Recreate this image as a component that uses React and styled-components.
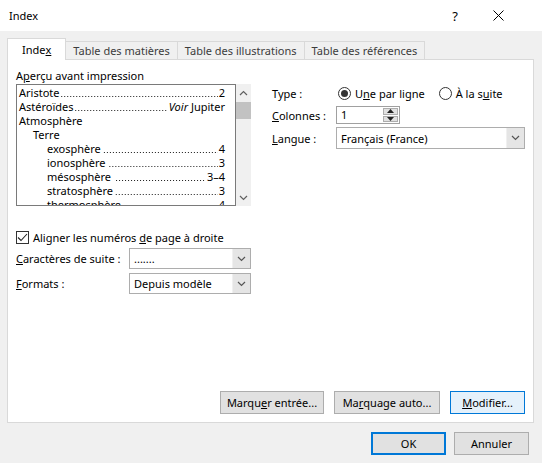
import React from "react";
import styled, { createGlobalStyle, css } from "styled-components";

const GlobalStyle = createGlobalStyle`
  html, body {
    margin: 0;
    padding: 0;
    background: #f0f0f0;
  }
  body {
    font-family: "Noto Sans", "Segoe UI", sans-serif;
    font-size: 11px;
    color: #000;
  }
`;

const Window = styled.div`
  width: 542px;
  height: 463px;
  display: flex;
  flex-direction: column;
  background: #f0f0f0;
  overflow: hidden;
`;

const TitleBar = styled.div`
  height: 31px;
  flex-shrink: 0;
  background: #fff;
  display: flex;
  align-items: center;
  padding-left: 9px;
  padding-right: 21px;
`;

const TitleText = styled.div`
  flex: 1;
`;

const CaptionButton = styled.div`
  width: ${(p) => p.$w}px;
  height: 31px;
  display: flex;
  align-items: center;
  justify-content: center;
  font-size: 13px;
`;

const Body = styled.div`
  flex: 1;
  display: flex;
  flex-direction: column;
  padding: 7px 8px 0 7px;
`;

const TabStrip = styled.div`
  display: flex;
  align-items: flex-end;
  height: 21px;
`;

const Tab = styled.div`
  box-sizing: border-box;
  border: 1px solid #d9d9d9;
  border-bottom: none;
  display: flex;
  align-items: center;
  white-space: nowrap;
  ${(p) =>
    p.$active
      ? css`
          height: 22px;
          padding: 0 14px;
          background: #fff;
          color: #000;
          position: relative;
          z-index: 1;
          margin-bottom: -1px;
        `
      : css`
          height: 18px;
          padding: 0 7px;
          background: #f0f0f0;
          color: #3c3c3c;
          margin-left: -1px;
        `}
`;

const Panel = styled.div`
  box-sizing: border-box;
  height: 364px;
  background: #fff;
  border: 1px solid #d9d9d9;
  display: flex;
  flex-direction: column;
  padding: 8px 8px 8px 8px;
`;

const TopGrid = styled.div`
  display: grid;
  grid-template-columns: 235px 1fr;
  column-gap: 21px;
`;

const Column = styled.div`
  display: flex;
  flex-direction: column;
  padding-top: ${(p) => p.$top || 0}px;
`;

const Label = styled.div`
  height: 16px;
  line-height: 16px;
`;

const ListWrap = styled.div`
  display: flex;
  height: 122px;
`;

const ListBox = styled.div`
  box-sizing: border-box;
  width: 220px;
  height: 122px;
  border: 1px solid #7a7a7a;
  background: #fff;
  overflow: hidden;
  padding-top: 1px;
`;

const Row = styled.div`
  height: 14px;
  line-height: 14px;
  display: flex;
  white-space: nowrap;
  padding-left: ${(p) => 2 + p.$level * 14}px;
  padding-right: 10px;
`;

/* dot leader between an entry and its page number */
const Leader = styled.span`
  flex: 1;
  margin: 0 1px;
  background-image: linear-gradient(to right, #1a1a1a 1px, transparent 1px);
  background-size: 3px 1px;
  background-repeat: repeat-x;
  background-position: right 0 bottom 3px;
`;

const Scrollbar = styled.div`
  width: 15px;
  height: 122px;
  background: #f0f0f0;
  display: flex;
  flex-direction: column;
  align-items: center;
`;

const ScrollArrow = styled.div`
  width: 15px;
  height: 17px;
  display: flex;
  align-items: center;
  justify-content: center;
`;

const Thumb = styled.div`
  width: 15px;
  height: 17px;
  margin-top: 1px;
  background: #c2c2c2;
`;

const CheckRow = styled.div`
  margin-top: 23px;
  height: 16px;
  display: flex;
  align-items: center;
  gap: 4px;
`;

const Checkbox = styled.div`
  box-sizing: border-box;
  width: 13px;
  height: 13px;
  border: 1px solid #333;
  background: #fff;
  display: flex;
  align-items: center;
  justify-content: center;
`;

const FieldRow = styled.div`
  display: flex;
  align-items: center;
  margin-top: ${(p) => p.$gap}px;
  min-height: ${(p) => p.$h || 0}px;
`;

const FieldLabel = styled.div`
  width: ${(p) => p.$w}px;
  flex-shrink: 0;
  white-space: nowrap;
`;

const Select = styled.div`
  box-sizing: border-box;
  width: ${(p) => (p.$w ? `${p.$w}px` : "auto")};
  flex: ${(p) => (p.$w ? "none" : 1)};
  height: ${(p) => p.$h}px;
  border: 1px solid #adadad;
  background: #fff;
  display: flex;
  align-items: stretch;
`;

const SelectValue = styled.div`
  flex: 1;
  display: flex;
  align-items: center;
  padding-left: 4px;
  white-space: nowrap;
`;

const SelectArrow = styled.div`
  width: 17px;
  background: #e5e5e5;
  border-left: 1px solid #f0f0f0;
  display: flex;
  align-items: center;
  justify-content: center;
`;

const RadioGroup = styled.div`
  display: flex;
  align-items: center;
  gap: 14px;
  padding-left: 2px;
`;

const RadioItem = styled.div`
  display: flex;
  align-items: center;
  gap: 4px;
  white-space: nowrap;
`;

const RadioCircle = styled.div`
  box-sizing: border-box;
  width: 13px;
  height: 13px;
  border-radius: 50%;
  border: 1px solid #333;
  background: #fff;
  display: flex;
  align-items: center;
  justify-content: center;
  &::after {
    content: "";
    width: 7px;
    height: 7px;
    border-radius: 50%;
    background: ${(p) => (p.$on ? "#333" : "transparent")};
  }
`;

const Spinner = styled.div`
  box-sizing: border-box;
  width: 64px;
  height: 18px;
  border: 1px solid #a0a0a0;
  background: #fff;
  display: flex;
`;

const SpinValue = styled.div`
  flex: 1;
  padding-left: 4px;
  line-height: 16px;
`;

const SpinButtons = styled.div`
  width: 15px;
  display: flex;
  flex-direction: column;
  gap: 1px;
  padding: 1px 1px 1px 0;
`;

const SpinButton = styled.div`
  flex: 1;
  background: #e1e1e1;
  border: 1px solid #adadad;
  display: flex;
  align-items: center;
  justify-content: center;
`;

const PanelButtons = styled.div`
  margin-top: auto;
  display: flex;
  justify-content: flex-end;
  gap: 10px;
`;

const Button = styled.div`
  box-sizing: border-box;
  width: ${(p) => p.$w}px;
  height: 23px;
  display: flex;
  align-items: center;
  justify-content: center;
  white-space: nowrap;
  background: ${(p) => (p.$hot ? "#e5f1fb" : "#e1e1e1")};
  border: ${(p) => (p.$default ? 2 : 1)}px solid
    ${(p) => (p.$hot || p.$default ? "#0078d7" : "#adadad")};
`;

const Footer = styled.div`
  display: flex;
  justify-content: flex-end;
  gap: 8px;
  margin-top: 9px;
  padding-right: 5px;
`;

const Chevron = ({ up, color = "#606060" }) => (
  <svg width="9" height="6" viewBox="0 0 9 6">
    <path
      d={up ? "M1 5 L4.5 1.5 L8 5" : "M1 1 L4.5 4.5 L8 1"}
      fill="none"
      stroke={color}
      strokeWidth="1.2"
    />
  </svg>
);

const Triangle = ({ up }) => (
  <svg width="7" height="4" viewBox="0 0 7 4">
    <path d={up ? "M0 4 L3.5 0 L7 4 Z" : "M0 0 L3.5 4 L7 0 Z"} fill="#222" />
  </svg>
);

const entries = [
  { name: "Aristote", page: "2", level: 0 },
  {
    name: "Astéroïdes",
    page: (
      <>
        <i>Voir</i> Jupiter
      </>
    ),
    level: 0,
  },
  { name: "Atmosphère", level: 0 },
  { name: "Terre", level: 1 },
  { name: "exosphère", page: "4", level: 2 },
  { name: "ionosphère\u00a0", page: "3", level: 2 },
  { name: "mésosphère\u00a0", page: "3–4", level: 2 },
  { name: "stratosphère", page: "3", level: 2 },
  { name: "thermosphère", page: "4", level: 2 },
];

function App() {
  return (
    <>
      <GlobalStyle />
      <Window>
        <TitleBar>
          <TitleText>Index</TitleText>
          <CaptionButton $w={40}>?</CaptionButton>
          <CaptionButton $w={46}>
            <svg width="11" height="11" viewBox="0 0 11 11">
              <path d="M0.5 0.5 L10.5 10.5 M10.5 0.5 L0.5 10.5" stroke="#000" strokeWidth="1" />
            </svg>
          </CaptionButton>
        </TitleBar>
        <Body>
          <TabStrip>
            <Tab $active>
              Inde<u>x</u>
            </Tab>
            <Tab>Table des matières</Tab>
            <Tab>Table des illustrations</Tab>
            <Tab>Table des références</Tab>
          </TabStrip>
          <Panel>
            <TopGrid>
              <Column>
                <Label>
                  A<u>p</u>erçu avant impression
                </Label>
                <ListWrap>
                  <ListBox>
                    {entries.map((e) => (
                      <Row key={e.name} $level={e.level}>
                        <span>{e.name}</span>
                        {e.page && (
                          <>
                            <Leader />
                            <span>{e.page}</span>
                          </>
                        )}
                      </Row>
                    ))}
                  </ListBox>
                  <Scrollbar>
                    <ScrollArrow>
                      <Chevron up />
                    </ScrollArrow>
                    <Thumb />
                    <div style={{ flex: 1 }} />
                    <ScrollArrow>
                      <Chevron />
                    </ScrollArrow>
                  </Scrollbar>
                </ListWrap>
                <CheckRow>
                  <Checkbox>
                    <svg width="11" height="9" viewBox="0 0 11 9">
                      <path d="M1 4.5 L4 7.5 L10 1" fill="none" stroke="#222" strokeWidth="1.1" />
                    </svg>
                  </Checkbox>
                  <span>
                    Aligner les numéros <u>d</u>e page à droite
                  </span>
                </CheckRow>
                <FieldRow $gap={3}>
                  <FieldLabel $w={113}>
                    <u>C</u>aractères de suite :
                  </FieldLabel>
                  <Select $w={122} $h={21}>
                    <SelectValue>.......</SelectValue>
                    <SelectArrow>
                      <Chevron color="#555" />
                    </SelectArrow>
                  </Select>
                </FieldRow>
                <FieldRow $gap={4}>
                  <FieldLabel $w={113}>
                    <u>F</u>ormats :
                  </FieldLabel>
                  <Select $w={122} $h={21}>
                    <SelectValue>Depuis modèle</SelectValue>
                    <SelectArrow>
                      <Chevron color="#555" />
                    </SelectArrow>
                  </Select>
                </FieldRow>
              </Column>
              <Column $top={16}>
                <FieldRow $gap={0} $h={18}>
                  <FieldLabel $w={64}>Type :</FieldLabel>
                  <RadioGroup>
                    <RadioItem>
                      <RadioCircle $on />
                      <span>
                        U<u>n</u>e par ligne
                      </span>
                    </RadioItem>
                    <RadioItem>
                      <RadioCircle />
                      <span>
                        À la s<u>u</u>ite
                      </span>
                    </RadioItem>
                  </RadioGroup>
                </FieldRow>
                <FieldRow $gap={4}>
                  <FieldLabel $w={64}>
                    <u>C</u>olonnes :
                  </FieldLabel>
                  <Spinner>
                    <SpinValue>1</SpinValue>
                    <SpinButtons>
                      <SpinButton>
                        <Triangle up />
                      </SpinButton>
                      <SpinButton>
                        <Triangle />
                      </SpinButton>
                    </SpinButtons>
                  </Spinner>
                </FieldRow>
                <FieldRow $gap={3}>
                  <FieldLabel $w={64}>
                    <u>L</u>angue :
                  </FieldLabel>
                  <Select $h={22}>
                    <SelectValue>Français (France)</SelectValue>
                    <SelectArrow>
                      <Chevron color="#555" />
                    </SelectArrow>
                  </Select>
                </FieldRow>
              </Column>
            </TopGrid>
            <PanelButtons>
              <Button $w={104}>
                Marqu<u>e</u>r entrée...
              </Button>
              <Button $w={106}>
                Ma<u>r</u>quage auto...
              </Button>
              <Button $w={75} $hot>
                <u>M</u>odifier...
              </Button>
            </PanelButtons>
          </Panel>
          <Footer>
            <Button $w={75} $default>
              OK
            </Button>
            <Button $w={75}>Annuler</Button>
          </Footer>
        </Body>
      </Window>
    </>
  );
}

export default App;
